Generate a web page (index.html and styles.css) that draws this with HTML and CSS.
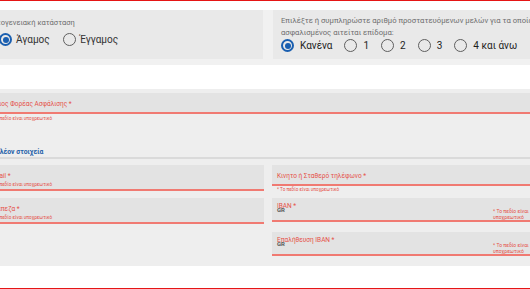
FILE: index.html
```html
<!DOCTYPE html>
<html lang="el">
<head>
  <meta charset="UTF-8" />
  <title>Αίτηση επιδόματος</title>
  <link rel="stylesheet" href="styles.css">
</head>
<body>
  <section class="status-row">
    <div class="panel panel-family">
      <div class="panel-title">Οικογενειακή κατάσταση</div>
      <div class="radios">
        <label class="opt"><span class="radio checked"></span>Άγαμος</label>
        <label class="opt"><span class="radio"></span>Έγγαμος</label>
      </div>
    </div>
    <div class="panel panel-members">
      <div class="panel-title">Επιλέξτε ή συμπληρώστε αριθμό προστατευόμενων μελών για τα οποία ο<br>ασφαλισμένος αιτείται επίδομα:</div>
      <div class="radios">
        <label class="opt"><span class="radio checked"></span>Κανένα</label>
        <label class="opt"><span class="radio"></span>1</label>
        <label class="opt"><span class="radio"></span>2</label>
        <label class="opt"><span class="radio"></span>3</label>
        <label class="opt"><span class="radio"></span>4 και άνω</label>
      </div>
    </div>
  </section>

  <section class="form-block">
    <div class="field field-wide">
      <div class="field-box"><div class="field-label">Κύριος Φορέας Ασφάλισης *</div></div>
      <div class="field-error">* Το πεδίο είναι υποχρεωτικό</div>
    </div>

    <h3 class="block-title">Επιπλέον στοιχεία</h3>

    <div class="cols">
      <div class="col">
        <div class="field-box tall">
          <div class="field-label">Email *</div>
          <div class="field-error">* Το πεδίο είναι υποχρεωτικό</div>
        </div>
        <div class="field-box tall">
          <div class="field-label">Τράπεζα *</div>
          <div class="field-error">* Το πεδίο είναι υποχρεωτικό</div>
        </div>
      </div>
      <div class="col">
        <div class="field-box short">
          <div class="field-label">Κινητο ή Σταθερό τηλέφωνο *</div>
        </div>
        <div class="field-error below">* Το πεδίο είναι υποχρεωτικό</div>
        <div class="field-box iban">
          <div class="iban-main">
            <div class="field-label">IBAN *</div>
            <div class="field-value">GR</div>
          </div>
          <div class="field-error side">* Το πεδίο είναι υποχρεωτικό</div>
        </div>
        <div class="field-box iban verify">
          <div class="iban-main">
            <div class="field-label">Επαλήθευση IBAN *</div>
            <div class="field-value">GR</div>
          </div>
          <div class="field-error side">* Το πεδίο είναι υποχρεωτικό</div>
        </div>
      </div>
    </div>
  </section>
</body>
</html>
```

FILE: styles.css
```css
* { box-sizing: border-box; }
html, body {
  margin: 0;
  padding: 0;
}
body {
  width: 530px;
  height: 289px;
  overflow: hidden;
  background: #fff;
  font-family: Roboto, "Noto Sans", sans-serif;
  border-top: 1px solid #e51515;
  border-bottom: 1px solid #e51515;
}

/* top row: family status + members */
.status-row {
  margin: 9px 0 0 -21px;
  width: 578px;
  display: grid;
  grid-template-columns: 284px 284px;
  column-gap: 10px;
  background: #f1f1f1;
  padding-bottom: 6px;
}
.panel {
  background: #e9e9e9;
  height: 49px;
  padding: 0 8px;
  overflow: hidden;
}
.panel-title {
  font-size: 7.5px;
  color: #6f6f6f;
  white-space: nowrap;
}
.panel-family { padding-left: 10px; }
.panel-family .panel-title {
  padding-top: 7px;
  line-height: 12px;
}
.panel-family .radios {
  margin: 4px 0 0 10px;
  gap: 13px;
}
.panel-family .opt { gap: 4px; }
.panel-members .panel-title {
  font-size: 7.7px;
  padding-top: 5px;
  line-height: 12px;
}
.panel-members .radios { gap: 12px; }
.panel-members .opt { gap: 6px; color: #1e1e1e; }
.radios {
  display: flex;
  align-items: center;
  height: 13px;
}
.opt {
  display: flex;
  align-items: center;
  font-size: 10px;
  color: #333;
  white-space: nowrap;
}
.radio {
  width: 13px;
  height: 13px;
  border-radius: 50%;
  border: 1.5px solid #5f5f5f;
  display: inline-flex;
  align-items: center;
  justify-content: center;
  flex: none;
}
.radio.checked {
  border: 2px solid #1a5fb0;
}
.radio.checked::after {
  content: "";
  width: 6px;
  height: 6px;
  border-radius: 50%;
  background: #1a5fb0;
}

/* form */
.form-block {
  margin: 24px 0 0 -15px;
  width: 566px;
  height: 177px;
  background: #eeeeee;
  padding-top: 4px;
}
.field-box {
  background: #e3e3e3;
  border-bottom: 2px solid #f07a72;
  padding: 0 5px;
}
.field-label {
  font-size: 6.5px;
  line-height: 10px;
  color: #e5524a;
  white-space: nowrap;
}
.field-error {
  font-size: 4.6px;
  line-height: 6px;
  color: #e5524a;
  white-space: nowrap;
}
.field-wide .field-box {
  height: 21px;
  padding: 6px 5px 0 3px;
}
.field-wide .field-error {
  margin-top: 2px;
  padding-left: 5px;
}
.block-title {
  margin: 25px 0 0;
  font-size: 6.8px;
  line-height: 10px;
  font-weight: bold;
  color: #2461a8;
  border-bottom: 2px solid #dadada;
}
.cols {
  margin-top: 6px;
  display: grid;
  grid-template-columns: minmax(0, 1fr) minmax(0, 1fr);
  column-gap: 8px;
}
.col .field-box.tall {
  padding: 6px 5px 1px;
  margin-bottom: 7px;
}
.tall .field-error { margin-top: 1px; }
.field-box.short {
  padding: 6px 5px 3px;
}
.field-error.below {
  margin-top: 1px;
  padding-left: 5px;
}
.field-box.iban {
  display: flex;
  height: 24px;
  margin-top: 5px;
  padding-top: 3px;
}
.field-box.verify {
  margin-top: 10px;
}
.iban-main { flex: 1; }
.field-value {
  margin-top: -5px;
  font-size: 6px;
  line-height: 8px;
  font-weight: bold;
  color: #5a5a5a;
}
.field-error.side {
  width: 40px;
  margin-right: 13px;
  padding-top: 7px;
  font-size: 5px;
  white-space: normal;
}
```
